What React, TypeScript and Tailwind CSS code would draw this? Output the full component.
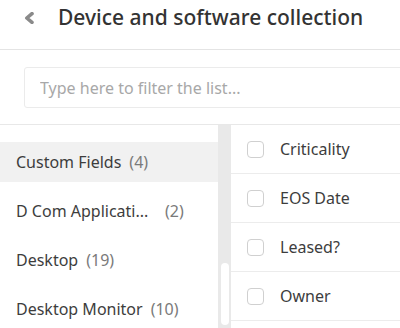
import React, { useState } from "react";

const groups = [
  { name: "Custom Fields", count: 4 },
  { name: "D Com Applications", count: 2, truncate: true },
  { name: "Desktop", count: 19 },
  { name: "Desktop Monitor", count: 10 },
];

const fields = ["Criticality", "EOS Date", "Leased?", "Owner"];

const App = () => {
  const [filter, setFilter] = useState("");
  const [checked, setChecked] = useState<string[]>([]);
  const [active, setActive] = useState(0);

  const toggle = (f: string) =>
    setChecked((prev) => (prev.includes(f) ? prev.filter((x) => x !== f) : [...prev, f]));

  return (
    <div
      className="w-[400px] h-[328px] overflow-hidden bg-white text-[#3d3d3d]"
      style={{ fontFamily: "'Noto Sans', sans-serif" }}
    >
      {/* Header */}
      <div className="flex items-center h-[50px] border-b border-[#e4e4e4] pb-[14px] pl-[24px]">
        <button className="w-[12px] h-[12px] flex items-center justify-center">
          <svg width="12" height="12" viewBox="0 0 12 12">
            <path d="M8 1.6 L2.8 6 L8 10.4" fill="none" stroke="#8a8a8a" strokeWidth="3.6" strokeLinejoin="round" strokeLinecap="round" />
          </svg>
        </button>
        <h1 className="ml-[22px] text-[21px] font-medium leading-none text-[#333]">Device and software collection</h1>
      </div>

      {/* Filter */}
      <div className="h-[75px] border-b border-[#e8e8e8] pl-[24px] pt-[17px]">
        <input
          type="text"
          value={filter}
          onChange={(e) => setFilter(e.target.value)}
          placeholder="Type here to filter the list..."
          className="w-[390px] h-[41px] border border-[#ebebeb] rounded-[3px] px-[15px] text-[16px] placeholder-[#a8a8a8] focus:outline-none"
        />
      </div>

      {/* Lists */}
      <div className="flex h-[203px]">
        <div className="w-[218px] pt-[12px]">
          {groups.map((g, i) => (
            <div key={g.name} className="h-[49px] flex items-center cursor-pointer" onClick={() => setActive(i)}>
              <div
                className={`flex items-center w-full h-[40px] pl-[16px] text-[16px] ${i === active ? "bg-[#f1f1f1]" : ""}`}
              >
                <span className={g.truncate ? "w-[149px] whitespace-nowrap" : ""}>
                  {g.truncate ? "D Com Applicati..." : g.name}
                </span>
                <span className={`text-[#7a7a7a] ${g.truncate ? "" : "ml-[8px]"}`}>({g.count})</span>
              </div>
            </div>
          ))}
        </div>

        {/* Scrollbar */}
        <div className="w-[13px] bg-[#e9e9e9] flex flex-col pt-[138px] pb-[3px] items-center">
          <div className="w-[8px] flex-1 bg-white rounded-full" />
        </div>

        <div className="flex-1">
          {fields.map((f) => (
            <label
              key={f}
              className="flex items-center h-[49px] border-b border-[#ececec] pl-[16px] text-[16px] cursor-pointer"
            >
              <input
                type="checkbox"
                checked={checked.includes(f)}
                onChange={() => toggle(f)}
                className="appearance-none w-[17px] h-[17px] border border-[#d0d0d0] rounded-[4px] checked:bg-[#4a90e2]"
              />
              <span className="ml-[16px]">{f}</span>
            </label>
          ))}
        </div>
      </div>
    </div>
  );
};

export default App;
